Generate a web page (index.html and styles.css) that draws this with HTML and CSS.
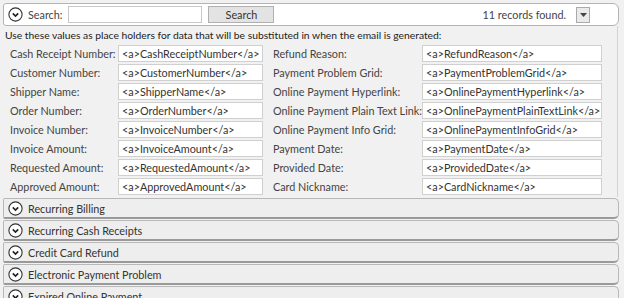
FILE: index.html
```html
<!DOCTYPE html>
<html lang="en">
<head>
    <meta charset="UTF-8">
    <title>Email Template Placeholders</title>
    <link rel="stylesheet" href="styles.css">
</head>
<body>
    <div class="panel">
        <div class="search-bar">
            <span class="expander"><svg width="15" height="15" viewBox="0 0 15 15"><circle cx="7.5" cy="7.5" r="6.6" fill="#fff" stroke="#333" stroke-width="1.1"/><path d="M4.8 6.4 L7.5 9.1 L10.2 6.4" fill="none" stroke="#222" stroke-width="1.6"/></svg></span>
            <span class="search-label">Search:</span>
            <input class="search-input" type="text">
            <button class="search-btn">Search</button>
            <span class="records">11 records found.</span>
            <button class="drop-btn"><svg width="7" height="4" viewBox="0 0 7 4"><path d="M0 0 L7 0 L3.5 4 Z" fill="#444"/></svg></button>
        </div>
        <div class="content">
            <div class="hint">Use these values as place holders for data that will be substituted in when the email is generated:</div>
            <div class="fields">
                <span class="label">Cash Receipt Number:</span><span class="box">&lt;a&gt;CashReceiptNumber&lt;/a&gt;</span>
                <span class="label label-2">Refund Reason:</span><span class="box">&lt;a&gt;RefundReason&lt;/a&gt;</span>
                <span class="label">Customer Number:</span><span class="box">&lt;a&gt;CustomerNumber&lt;/a&gt;</span>
                <span class="label label-2">Payment Problem Grid:</span><span class="box">&lt;a&gt;PaymentProblemGrid&lt;/a&gt;</span>
                <span class="label">Shipper Name:</span><span class="box">&lt;a&gt;ShipperName&lt;/a&gt;</span>
                <span class="label label-2">Online Payment Hyperlink:</span><span class="box">&lt;a&gt;OnlinePaymentHyperlink&lt;/a&gt;</span>
                <span class="label">Order Number:</span><span class="box">&lt;a&gt;OrderNumber&lt;/a&gt;</span>
                <span class="label label-2">Online Payment Plain Text Link:</span><span class="box">&lt;a&gt;OnlinePaymentPlainTextLink&lt;/a&gt;</span>
                <span class="label">Invoice Number:</span><span class="box">&lt;a&gt;InvoiceNumber&lt;/a&gt;</span>
                <span class="label label-2">Online Payment Info Grid:</span><span class="box">&lt;a&gt;OnlinePaymentInfoGrid&lt;/a&gt;</span>
                <span class="label">Invoice Amount:</span><span class="box">&lt;a&gt;InvoiceAmount&lt;/a&gt;</span>
                <span class="label label-2">Payment Date:</span><span class="box">&lt;a&gt;PaymentDate&lt;/a&gt;</span>
                <span class="label">Requested Amount:</span><span class="box">&lt;a&gt;RequestedAmount&lt;/a&gt;</span>
                <span class="label label-2">Provided Date:</span><span class="box">&lt;a&gt;ProvidedDate&lt;/a&gt;</span>
                <span class="label">Approved Amount:</span><span class="box">&lt;a&gt;ApprovedAmount&lt;/a&gt;</span>
                <span class="label label-2">Card Nickname:</span><span class="box">&lt;a&gt;CardNickname&lt;/a&gt;</span>
            </div>
        </div>
        <div class="group"><span class="expander"><svg width="15" height="15" viewBox="0 0 15 15"><circle cx="7.5" cy="7.5" r="6.6" fill="#fff" stroke="#333" stroke-width="1.1"/><path d="M4.8 6.4 L7.5 9.1 L10.2 6.4" fill="none" stroke="#222" stroke-width="1.6"/></svg></span>Recurring Billing</div>
        <div class="group"><span class="expander"><svg width="15" height="15" viewBox="0 0 15 15"><circle cx="7.5" cy="7.5" r="6.6" fill="#fff" stroke="#333" stroke-width="1.1"/><path d="M4.8 6.4 L7.5 9.1 L10.2 6.4" fill="none" stroke="#222" stroke-width="1.6"/></svg></span>Recurring Cash Receipts</div>
        <div class="group"><span class="expander"><svg width="15" height="15" viewBox="0 0 15 15"><circle cx="7.5" cy="7.5" r="6.6" fill="#fff" stroke="#333" stroke-width="1.1"/><path d="M4.8 6.4 L7.5 9.1 L10.2 6.4" fill="none" stroke="#222" stroke-width="1.6"/></svg></span>Credit Card Refund</div>
        <div class="group"><span class="expander"><svg width="15" height="15" viewBox="0 0 15 15"><circle cx="7.5" cy="7.5" r="6.6" fill="#fff" stroke="#333" stroke-width="1.1"/><path d="M4.8 6.4 L7.5 9.1 L10.2 6.4" fill="none" stroke="#222" stroke-width="1.6"/></svg></span>Electronic Payment Problem</div>
        <div class="group"><span class="expander"><svg width="15" height="15" viewBox="0 0 15 15"><circle cx="7.5" cy="7.5" r="6.6" fill="#fff" stroke="#333" stroke-width="1.1"/><path d="M4.8 6.4 L7.5 9.1 L10.2 6.4" fill="none" stroke="#222" stroke-width="1.6"/></svg></span>Expired Online Payment</div>
    </div>
</body>
</html>
```

FILE: styles.css
```css
* { margin: 0; padding: 0; box-sizing: border-box; }
body { font-family: Lato, "Liberation Sans", sans-serif; font-size: 10.8px; color: #333; background: #f1f1f1; overflow: hidden; }
.panel { padding: 3px 5px 0 3px; }
.search-bar { height: 23px; display: flex; align-items: center; background: #fff; border: 1px solid #b4b4b4; border-radius: 3px 6px 6px 3px; padding: 0 4px; }
.expander { display: flex; width: 15px; height: 15px; margin-right: 5px; }
.search-label { margin-right: 6px; color: #444; }
.search-input { width: 134px; height: 17px; border: 1px solid #c8c8c8; background: #fff; }
.search-btn { width: 66px; height: 17px; margin-left: 6px; border: 1px solid #b0b0b0; background: #e3e3e3; font: inherit; color: #333; }
.records { margin-left: auto; color: #444; }
.drop-btn { width: 14px; height: 16px; margin: 0 24px 0 10px; border: 1px solid #aaa; background: #eaeaea; display: flex; align-items: center; justify-content: center; }
.content { padding: 1px 0 2px 2px; border-right: 1px solid #d4d4d4; margin-right: 1px; }
.hint { height: 16px; line-height: 16px; font-size: 10.3px; color: #222; }
.fields { display: grid; grid-template-columns: 106px 145px 155px 180px; column-gap: 2px; row-gap: 2px; padding: 2px 0 0 5px; }
.label { height: 17px; line-height: 17px; color: #444; white-space: nowrap; }
.label-2 { padding-left: 8px; }
.box { height: 17px; line-height: 15px; padding: 0 3px; border: 1px solid #d0d0d0; background: #fff; color: #333; white-space: nowrap; overflow: hidden; }
.group { height: 21px; margin: 1px 0 0; display: flex; align-items: center; padding-left: 4px; background: #eeeeee; border: 1px solid #b8b8b8; border-bottom: 2px solid #9a9a9a; border-radius: 2px 5px 5px 2px; color: #333; }
.group:first-of-type { margin-top: 2px; }
```
